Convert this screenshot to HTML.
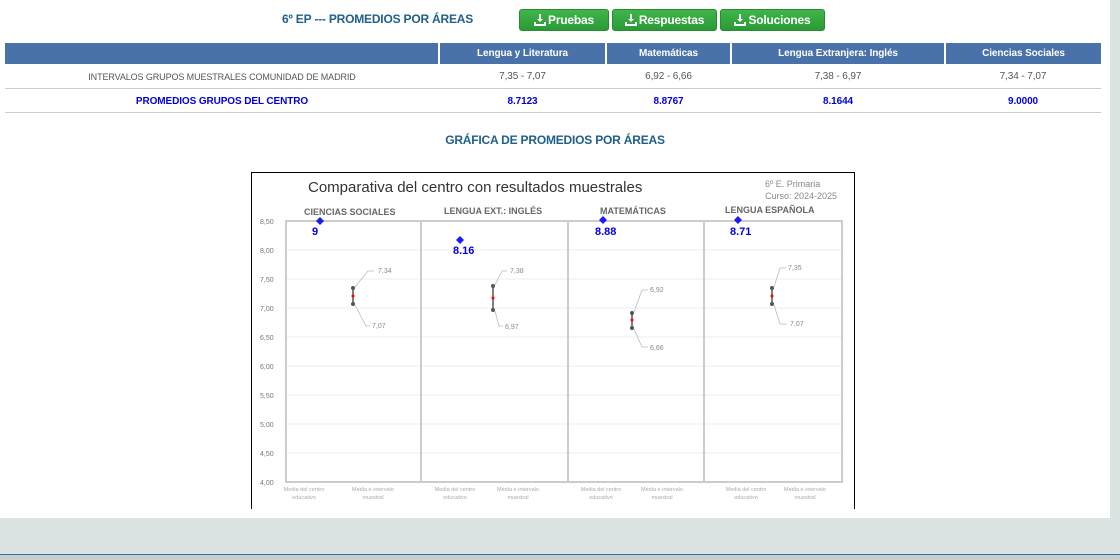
<!DOCTYPE html>
<html><head><meta charset="utf-8"><style>
*{margin:0;padding:0;box-sizing:border-box}
body{width:1120px;height:560px;background:#dce3e3;font-family:"Liberation Sans",sans-serif;position:relative;overflow:hidden}
.card{position:absolute;left:0;top:0;width:1110px;height:518px;background:#fff}
.bot{position:absolute;left:0;top:554px;width:1120px;height:6px;background:#c9cfcf;border-top:1px solid #2f6fa3}
.title{position:absolute;left:282px;top:12px;font-size:12px;letter-spacing:-0.2px;font-weight:bold;color:#1f5f8a}
.btn{position:absolute;top:9px;height:22px;background:linear-gradient(#3fb54a,#2a9a35);border:1px solid #2a8a33;border-radius:3px;color:#fff;font-size:12px;letter-spacing:-0.2px;font-weight:bold;line-height:20px;text-align:center}
.btn svg{vertical-align:-2px;margin-right:2px}
table{position:absolute;left:5px;top:43px;width:1096px;border-collapse:collapse;font-size:10px;letter-spacing:-0.1px}
th{background:#4a72aa;color:#fff;height:21px;border-left:2px solid #fff;font-weight:bold}
th:first-child{border-left:none}
td{text-align:center;height:24px;border-bottom:1px solid #ccc;padding-top:2px}
.r1 td{color:#555}
.r2 td{color:#0000e0;font-weight:bold}
.gt{position:absolute;left:0;width:1110px;text-align:center;top:133px;font-size:12px;letter-spacing:-0.2px;font-weight:bold;color:#1f5f8a}
.chart{position:absolute;left:251px;top:172px;width:604px;height:337px;border-left:1px solid #000;border-top:1px solid #000;border-right:1px solid #000;background:#fff}
</style></head><body>
<div class="card"></div>
<div class="bot"></div>
<div class="title">6º EP --- PROMEDIOS POR ÁREAS</div>
<div class="btn" style="left:519px;width:90px"><svg width="12" height="12" viewBox="0 0 12 12"><path d="M5 0h2v5h2l-3 3-3-3h2z M0 8h2v2h8V8h2v4H0z" fill="#fff"/></svg>Pruebas</div>
<div class="btn" style="left:612px;width:105px"><svg width="12" height="12" viewBox="0 0 12 12"><path d="M5 0h2v5h2l-3 3-3-3h2z M0 8h2v2h8V8h2v4H0z" fill="#fff"/></svg>Respuestas</div>
<div class="btn" style="left:720px;width:105px"><svg width="12" height="12" viewBox="0 0 12 12"><path d="M5 0h2v5h2l-3 3-3-3h2z M0 8h2v2h8V8h2v4H0z" fill="#fff"/></svg>Soluciones</div>
<table>
<tr><th style="width:434px"></th><th style="width:167px">Lengua y Literatura</th><th style="width:125px">Matemáticas</th><th style="width:214px">Lengua Extranjera: Inglés</th><th>Ciencias Sociales</th></tr>
<tr class="r1"><td style="font-size:9px">INTERVALOS GRUPOS MUESTRALES COMUNIDAD DE MADRID</td><td>7,35 - 7,07</td><td>6,92 - 6,66</td><td>7,38 - 6,97</td><td>7,34 - 7,07</td></tr>
<tr class="r2"><td>PROMEDIOS GRUPOS DEL CENTRO</td><td>8.7123</td><td>8.8767</td><td>8.1644</td><td>9.0000</td></tr>
</table>
<div class="gt">GRÁFICA DE PROMEDIOS POR ÁREAS</div>
<div class="chart">
<svg width="604" height="337" viewBox="251 172 604 337" style="position:absolute;left:-1px;top:-1px" font-family="Liberation Sans, sans-serif">
<text x="308" y="192" font-size="15" fill="#333">Comparativa del centro con resultados muestrales</text>
<text x="765" y="187" font-size="9" fill="#888">6º E. Primaria</text>
<text x="765" y="199" font-size="9" fill="#888">Curso: 2024-2025</text>
<g font-size="9" font-weight="bold" fill="#666">
<text x="304" y="215">CIENCIAS SOCIALES</text><text x="444" y="214">LENGUA EXT.: INGLÉS</text>
<text x="600" y="214">MATEMÁTICAS</text><text x="725" y="213">LENGUA ESPAÑOLA</text></g>
<g stroke="#eee" stroke-width="1">
<line x1="286" y1="250" x2="842" y2="250"/><line x1="286" y1="279" x2="842" y2="279"/><line x1="286" y1="308" x2="842" y2="308"/><line x1="286" y1="337" x2="842" y2="337"/><line x1="286" y1="366" x2="842" y2="366"/><line x1="286" y1="395" x2="842" y2="395"/><line x1="286" y1="424" x2="842" y2="424"/><line x1="286" y1="453" x2="842" y2="453"/></g>
<g fill="#777" font-size="7">
<text x="260" y="224">8,50</text><text x="260" y="253">8,00</text><text x="260" y="282">7,50</text><text x="260" y="311">7,00</text><text x="260" y="340">6,50</text><text x="260" y="369">6,00</text><text x="260" y="398">5,50</text><text x="260" y="427">5,00</text><text x="260" y="456">4,50</text><text x="260" y="485">4,00</text></g>
<g stroke="#ccc" stroke-width="2" fill="none">
<rect x="286" y="221" width="556" height="261"/>
<line x1="421" y1="221" x2="421" y2="482"/><line x1="568" y1="221" x2="568" y2="482"/><line x1="704" y1="221" x2="704" y2="482"/></g>
<g fill="#aaa" font-size="5.5" text-anchor="middle">
<text x="304" y="491">Media del centro</text><text x="304" y="499">educativo</text><text x="373" y="491">Media e intervalo</text><text x="373" y="499">muestral</text>
<text x="455" y="491">Media del centro</text><text x="455" y="499">educativo</text><text x="518" y="491">Media e intervalo</text><text x="518" y="499">muestral</text>
<text x="601" y="491">Media del centro</text><text x="601" y="499">educativo</text><text x="662" y="491">Media e intervalo</text><text x="662" y="499">muestral</text>
<text x="746" y="491">Media del centro</text><text x="746" y="499">educativo</text><text x="805" y="491">Media e intervalo</text><text x="805" y="499">muestral</text></g>
<g stroke="#555" stroke-width="1.5">
<line x1="353" y1="288" x2="353" y2="304"/><line x1="493" y1="286" x2="493" y2="310"/><line x1="632" y1="313" x2="632" y2="328"/><line x1="772" y1="288" x2="772" y2="304"/></g>
<g fill="#555"><circle cx="353" cy="288" r="2"/><circle cx="353" cy="304" r="2"/><circle cx="493" cy="286" r="2"/><circle cx="493" cy="310" r="2"/><circle cx="632" cy="313" r="2"/><circle cx="632" cy="328" r="2"/><circle cx="772" cy="288" r="2"/><circle cx="772" cy="304" r="2"/></g>
<g fill="red"><circle cx="353" cy="296" r="1.5"/><circle cx="493" cy="298" r="1.5"/><circle cx="632" cy="320" r="1.5"/><circle cx="772" cy="296" r="1.5"/></g>
<g stroke="#bbb" fill="none" stroke-width="0.8">
<path d="M355 287 L368 271 L374 271"/><path d="M355 305 L366 326 L370 326"/>
<path d="M495 285 L502 271 L507 271"/><path d="M495 311 L499 326 L503 326"/>
<path d="M634 312 L642 290 L648 290"/><path d="M634 329 L642 347 L648 347"/>
<path d="M774 287 L780 268 L786 268"/><path d="M774 305 L780 324 L787 324"/></g>
<g fill="#888" font-size="7">
<text x="378" y="273">7,34</text><text x="372" y="328">7,07</text><text x="510" y="273">7,38</text><text x="505" y="329">6,97</text>
<text x="650" y="292">6,92</text><text x="650" y="350">6,66</text><text x="788" y="270">7,35</text><text x="790" y="326">7,07</text></g>
<g fill="#1a1aff"><path d="M320 217l4 4-4 4-4-4z"/><path d="M460 236l4 4-4 4-4-4z"/><path d="M603 216l4 4-4 4-4-4z"/><path d="M738 216l4 4-4 4-4-4z"/></g>
<g fill="#0000e0" font-size="11" font-weight="bold">
<text x="312" y="235">9</text><text x="453" y="254">8.16</text><text x="595" y="235">8.88</text><text x="730" y="235">8.71</text></g>
</svg>
</div>
</body></html>
